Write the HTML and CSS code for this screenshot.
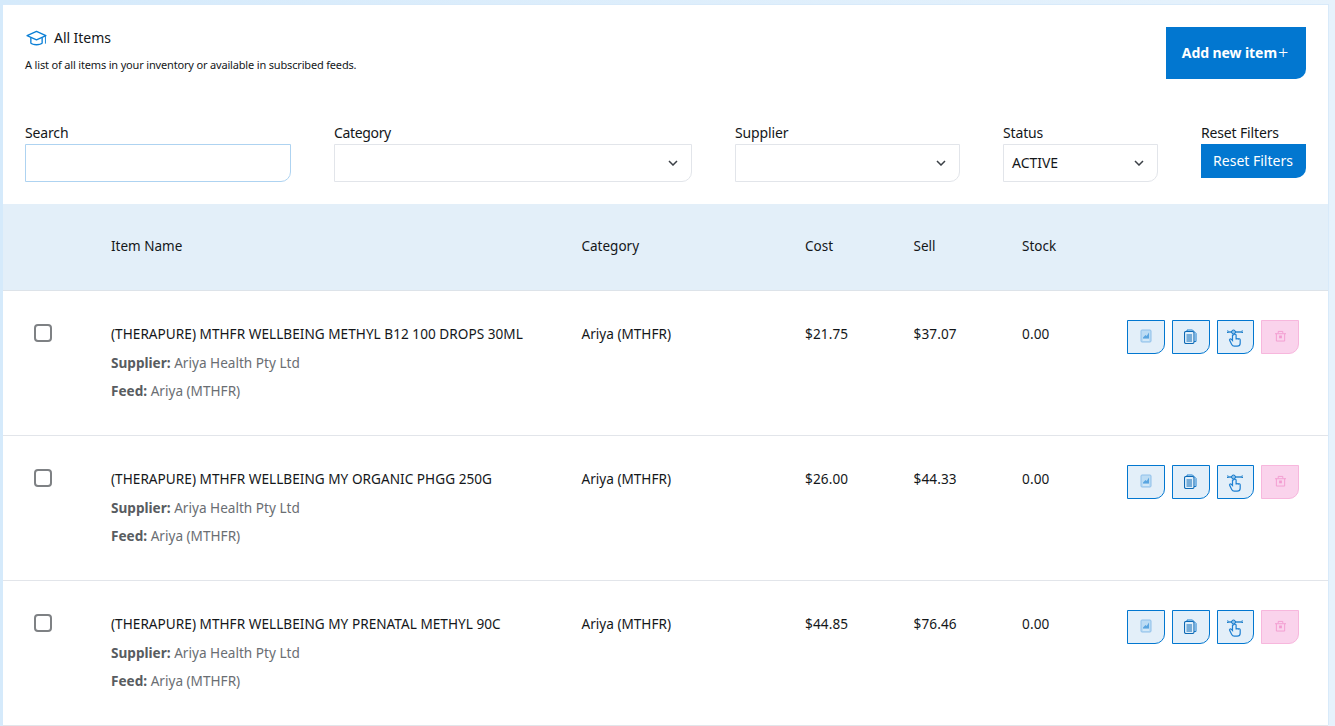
FILE: index.html
```html
<!DOCTYPE html>
<html lang="en">
<head>
<meta charset="utf-8">
<title>All Items</title>
<link rel="stylesheet" href="styles.css">
</head>
<body>
<svg class="sprites" width="0" height="0" aria-hidden="true">
  <symbol id="i-report" viewBox="0 0 12 14">
    <rect x="1" y="1" width="10" height="12" rx="1" fill="#bcdcf4" stroke="#8fc0ea"/>
    <path d="M3 8.500l2.500-2.500 1.200 1L9 3.500V9.500H3z" fill="#5aa5e0"/>
    <path d="M3 11h6" stroke="#e8f3fb"/>
  </symbol>
  <symbol id="i-copy" viewBox="0 0 13 15">
    <path d="M3 2.500V1h5.500L12 4.500V12.500H10" fill="#e1effa" stroke="#1a7fd0"/>
    <rect x="0.500" y="2.500" width="9.500" height="12" rx="1.500" fill="#e1effa" stroke="#0b68b4" stroke-width="1.100"/>
    <path d="M2.500 6h5.500M2.500 8h5.500M2.500 10h5.500M2.500 12h5.500" stroke="#0b68b4"/>
  </symbol>
  <symbol id="i-touch" viewBox="0 0 16 18">
    <path d="M1 3h14" stroke="#1479c8" stroke-width="1.300"/>
    <path d="M0.700 1.500v3M15.300 1.500v3" stroke="#1479c8" stroke-width="1.300" stroke-dasharray="1 0.500"/>
    <circle cx="6.500" cy="3" r="2" fill="#8ec3ee" stroke="#1479c8"/>
    <path d="M5.500 6v5.500L4.200 10.200c-1-.8-2.100.2-1.500 1.200l2 4c.5 1 1.300 1.800 2.500 1.800h3c1.700 0 3-1.300 3-3v-3.400c0-1.400-1.800-1.400-2-.2 0-1.400-1.900-1.400-2.100-.1V6c0-1.200-2.600-1.200-2.600 0z" fill="#e1effa" stroke="#1f80d2" stroke-width="1.200"/>
  </symbol>
  <symbol id="i-trash" viewBox="0 0 12 12">
    <path d="M3.500 3V1h5v2" fill="none" stroke="#f39ad0"/>
    <path d="M0 3.500h12" stroke="#f39ad0"/>
    <path d="M1.500 3.500v8h9v-8" fill="none" stroke="#f39ad0"/>
    <rect x="4.500" y="5.500" width="3" height="3" fill="#f39ad0"/>
  </symbol>
  <symbol id="i-chevron" viewBox="0 0 10 6">
    <path d="M1 1l4 4 4-4" fill="none" stroke="#3b4046" stroke-width="1.500"/>
  </symbol>
</svg>

<main class="card">
  <header class="top">
    <div class="title-block">
      <h1 class="title">
        <svg class="cap" viewBox="0 0 22 17" width="21" height="16" aria-hidden="true">
          <path d="M11 1.500L1 6l10 4.500L21 6z" fill="none" stroke="#0b7fd6" stroke-width="1.400" stroke-linejoin="round"/>
          <path d="M5 8v6c2 2.200 10 2.200 12 0V8" fill="none" stroke="#0b7fd6" stroke-width="1.400"/>
          <path d="M20.500 6.500v8" stroke="#0b7fd6"/>
        </svg>
        All Items
      </h1>
      <p class="subtitle">A list of all items in your inventory or available in subscribed feeds.</p>
    </div>
    <button class="btn-add">Add new item<span class="plus">+</span></button>
  </header>

  <section class="filters">
    <div class="field f-search"><label class="lbl">Search</label><div class="control focused"></div></div>
    <div class="field f-category"><label class="lbl">Category</label><div class="control"><svg class="chev"><use href="#i-chevron"/></svg></div></div>
    <div class="field f-supplier"><label class="lbl">Supplier</label><div class="control"><svg class="chev"><use href="#i-chevron"/></svg></div></div>
    <div class="field f-status"><label class="lbl">Status</label><div class="control"><span>ACTIVE</span><svg class="chev"><use href="#i-chevron"/></svg></div></div>
    <div class="field f-reset"><label class="lbl">Reset Filters</label><button class="btn-reset">Reset Filters</button></div>
  </section>

  <div class="row head">
    <div></div>
    <div>Item Name</div>
    <div>Category</div>
    <div>Cost</div>
    <div>Sell</div>
    <div>Stock</div>
    <div></div>
  </div>

  <div class="row item">
    <div><span class="check"></span></div>
    <div>
      <div class="name">(THERAPURE) MTHFR WELLBEING METHYL B12 100 DROPS 30ML</div>
      <div class="meta"><b>Supplier:</b> Ariya Health Pty Ltd</div>
      <div class="meta"><b>Feed:</b> Ariya (MTHFR)</div>
    </div>
    <div>Ariya (MTHFR)</div>
    <div class="num">$21.75</div>
    <div class="num">$37.07</div>
    <div class="num">0.00</div>
    <div class="actions">
      <button class="act"><svg class="ic-report"><use href="#i-report"/></svg></button>
      <button class="act"><svg class="ic-copy"><use href="#i-copy"/></svg></button>
      <button class="act"><svg class="ic-touch"><use href="#i-touch"/></svg></button>
      <button class="act danger"><svg class="ic-trash"><use href="#i-trash"/></svg></button>
    </div>
  </div>

  <div class="row item">
    <div><span class="check"></span></div>
    <div>
      <div class="name">(THERAPURE) MTHFR WELLBEING MY ORGANIC PHGG 250G</div>
      <div class="meta"><b>Supplier:</b> Ariya Health Pty Ltd</div>
      <div class="meta"><b>Feed:</b> Ariya (MTHFR)</div>
    </div>
    <div>Ariya (MTHFR)</div>
    <div class="num">$26.00</div>
    <div class="num">$44.33</div>
    <div class="num">0.00</div>
    <div class="actions">
      <button class="act"><svg class="ic-report"><use href="#i-report"/></svg></button>
      <button class="act"><svg class="ic-copy"><use href="#i-copy"/></svg></button>
      <button class="act"><svg class="ic-touch"><use href="#i-touch"/></svg></button>
      <button class="act danger"><svg class="ic-trash"><use href="#i-trash"/></svg></button>
    </div>
  </div>

  <div class="row item">
    <div><span class="check"></span></div>
    <div>
      <div class="name">(THERAPURE) MTHFR WELLBEING MY PRENATAL METHYL 90C</div>
      <div class="meta"><b>Supplier:</b> Ariya Health Pty Ltd</div>
      <div class="meta"><b>Feed:</b> Ariya (MTHFR)</div>
    </div>
    <div>Ariya (MTHFR)</div>
    <div class="num">$44.85</div>
    <div class="num">$76.46</div>
    <div class="num">0.00</div>
    <div class="actions">
      <button class="act"><svg class="ic-report"><use href="#i-report"/></svg></button>
      <button class="act"><svg class="ic-copy"><use href="#i-copy"/></svg></button>
      <button class="act"><svg class="ic-touch"><use href="#i-touch"/></svg></button>
      <button class="act danger"><svg class="ic-trash"><use href="#i-trash"/></svg></button>
    </div>
  </div>
</main>
</body>
</html>
```

FILE: styles.css
```css
* { box-sizing: border-box; }
html, body { margin: 0; height: 100%; overflow: hidden; }
body {
  background: linear-gradient(90deg, #d5eafb 0%, #e6f2fc 100%);
  padding: 5px 7px 0 3px;
  font-family: "Noto Sans", "Open Sans", sans-serif;
  font-size: 14px;
  color: #14171a;
}
.sprites { position: absolute; }
.card { background: #fff; height: 721px; box-shadow: 1px -1px 0 #d8eafa; }

.top { display: flex; justify-content: space-between; padding: 22px 22px 0 22px; height: 119px; }
.title {
  margin: 0; display: flex; align-items: center; gap: 7px;
  font-size: 14px; font-weight: 400; line-height: 22px; height: 22px;
  letter-spacing: -0.05px;
}
.cap { display: block; margin: 0 0 0 1px; }
.subtitle { margin: 8px 0 0; font-size: 11px; line-height: 16px; letter-spacing: -0.17px; }
.btn-add {
  width: 140px; height: 52px; border: 0; background: #0277d0; color: #fff;
  font: 700 14px "Noto Sans", sans-serif; letter-spacing: -0.08px;
  border-radius: 0 0 10px 0; padding: 0 2px 2px 0;
}
.plus { font-weight: 300; font-size: 18px; line-height: 14px; vertical-align: -1px; margin-left: 1px; }

.filters { display: flex; gap: 43px; padding: 0 22px; height: 80px; }
.field { display: flex; flex-direction: column; }
.lbl { font-size: 14px; line-height: 18px; height: 20px; letter-spacing: -0.15px; }
.f-search { width: 266px; }
.f-category { width: 358px; }
.f-category .lbl { letter-spacing: -0.35px; }
.f-supplier { width: 225px; }
.f-status { width: 155px; }
.f-reset { width: 105px; }
.control {
  height: 38px; border: 1px solid #e2e5ea; border-radius: 0 0 10px 0;
  display: flex; align-items: center; justify-content: flex-end; padding: 0 13px 0 8px;
  background: #fff;
}
.control span { margin-right: auto; margin-top: -2px; letter-spacing: -0.02px; }
.control.focused { border-color: #aed3f1; }
.chev { width: 10px; height: 6px; }
.btn-reset {
  height: 34px; border: 0; background: #0277d0; color: #fff;
  font: 400 14px "Noto Sans", sans-serif; padding: 0 1px 2px 0;
  border-radius: 0 0 10px 0;
}

.row {
  display: grid;
  grid-template-columns: 108px 470.500px 223.500px 108.500px 108.500px 105px 1fr;
}
.head {
  height: 87px; background: #e3eff9; align-items: center;
  border-bottom: 1px solid #dde3e9; padding-bottom: 2px;
  font-size: 13.500px;
}
.item {
  height: 145px; border-bottom: 1px solid #e2e5ea; padding-top: 33px;
  align-items: start; line-height: 20px; font-size: 13.600px;
}
.check {
  display: block; width: 18px; height: 18px; margin: 0 0 0 31px;
  border: 2px solid #7e8184; border-radius: 4px; background: #fff;
}
.name { font-size: 13.600px; line-height: 20px; letter-spacing: 0.03px; }
.num { letter-spacing: 0.12px; }
.meta { color: #6a6e73; line-height: 20px; margin-top: 9px; font-size: 13.600px; }
.meta + .meta { margin-top: 8px; }
.meta b { font-weight: 700; color: #585c61; }

.actions { display: flex; gap: 7px; margin-top: -4px; }
.act {
  width: 37.800px; height: 34px; padding: 0;
  background: #e3eff9; border: 1px solid #0277d0; border-radius: 0 0 10px 0;
  display: flex; align-items: center; justify-content: center;
}
.danger { background: #fad3ec; border-color: #f7b7dd; }
.ic-report { width: 12px; height: 14px; margin-bottom: 2px; }
.ic-copy { width: 13px; height: 15px; margin-bottom: 1px; }
.ic-touch { width: 16px; height: 18px; margin-top: 1px; }
.ic-trash { width: 11px; height: 12px; margin-bottom: 2px; }
```
